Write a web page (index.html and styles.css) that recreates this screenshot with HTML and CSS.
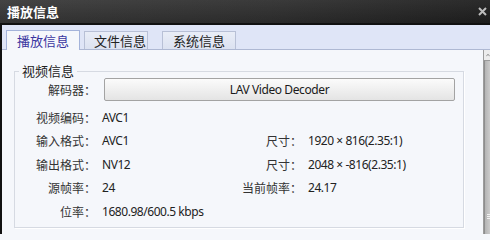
FILE: index.html
```html
<!DOCTYPE html>
<html lang="zh-CN">
<head>
<meta charset="utf-8">
<title>播放信息</title>
<link rel="stylesheet" href="styles.css">
</head>
<body>
<div class="window">
  <div class="titlebar">
    <span class="title">播放信息</span>
    <svg class="close" width="9" height="9" viewBox="0 0 9 9"><path d="M1 1L8 8M8 1L1 8" stroke="#bdbdbd" stroke-width="2"/></svg>
  </div>
  <div class="body">
    <div class="tabs">
      <div class="tab active t1">播放信息</div>
      <div class="tab t2">文件信息</div>
      <div class="tab t3">系统信息</div>
    </div>
    <div class="content">
      <div class="panel">
        <fieldset class="group">
          <legend>视频信息</legend>
          <div class="row-decoder">
            <div class="lbl">解码器：</div>
            <div class="btn">LAV Video Decoder</div>
          </div>
          <div class="grid">
            <div class="lbl">视频编码：</div><div class="val">AVC1</div><div></div><div></div>
            <div class="lbl">输入格式：</div><div class="val">AVC1</div><div class="lbl">尺寸：</div><div class="val">1920 × 816(2.35:1)</div>
            <div class="lbl">输出格式：</div><div class="val">NV12</div><div class="lbl">尺寸：</div><div class="val">2048 × -816(2.35:1)</div>
            <div class="lbl">源帧率：</div><div class="val">24</div><div class="lbl">当前帧率：</div><div class="val">24.17</div>
            <div class="lbl">位率：</div><div class="val">1680.98/600.5 kbps</div><div></div><div></div>
          </div>
        </fieldset>
      </div>
      <div class="scrollbar">
        <div class="sb-up"><svg width="5" height="4" viewBox="0 0 5 4"><path d="M0.5 3.5L2.5 1L4.5 3.5" fill="none" stroke="#7a7a7a" stroke-width="1"/></svg></div>
        <div class="sb-thumb"><div class="sb-grip"></div></div>
      </div>
    </div>
  </div>
</div>
</body>
</html>
```
FILE: styles.css
```css
html, body {
  margin: 0;
  padding: 0;
}
body {
  width: 490px;
  height: 234px;
  overflow: hidden;
  background: #f5f7fb;
  font-family: "Noto Sans CJK SC", "Noto Sans", sans-serif;
}
.window {
  width: 490px;
  height: 234px;
  display: flex;
  flex-direction: column;
}
.titlebar {
  height: 23px;
  border-bottom: 2px solid #111;
  background:
    linear-gradient(to bottom, rgba(255,255,255,0.05), rgba(0,0,0,0.12)),
    linear-gradient(to right, #3a3a3a, #303030 55%, #202020);
  display: flex;
  align-items: center;
  justify-content: space-between;
  padding: 0 3px 0 7px;
}
.title {
  color: #fff;
  font-weight: bold;
  font-size: 13px;
  line-height: 16px;
  font-family: "Noto Sans CJK SC", sans-serif;
}
.close {
  display: block;
  margin-top: -1px;
}
.body {
  flex: 1;
  display: flex;
  flex-direction: column;
  border-left: 2px solid #111;
}
.tabs {
  height: 24px;
  background: #dfe5f7;
  border-bottom: 1px solid #aeb8d3;
  display: flex;
  align-items: flex-end;
  padding-left: 4px;
}
.tab {
  box-sizing: border-box;
  font-size: 13px;
  color: #222;
  border: 1px solid #b8c0d6;
  border-bottom: none;
  height: 18px;
  line-height: 17px;
  background: linear-gradient(to bottom, #e9edf7, #dce2f1);
}
.tab.active {
  height: 20px;
  line-height: 19px;
  margin-bottom: -1px;
  background: #f5f7fb;
  border-color: #a4b3da;
  color: #3a35a0;
  position: relative;
}
.t1 { width: 74px; padding-left: 10px; }
.t2 { width: 64px; padding-left: 9px; margin-left: 4px; }
.t3 { width: 74px; padding-left: 10px; margin-left: 14px; }
.content {
  flex: 1;
  display: flex;
  background: #f5f7fb;
  min-height: 0;
}
.panel {
  flex: 1;
  padding: 0 19px 0 12px;
}
.group {
  margin: 14px 0 0 0;
  padding: 0 0 3px 0;
  border: 1px solid #d6dae2;
  box-shadow: 1px 1px 0 #fff;
  min-width: 0;
}
.group legend {
  margin-left: 4px;
  padding: 0 3px;
  font-size: 13px;
  line-height: 14px;
  color: #222;
}
.row-decoder,
.grid {
  display: grid;
  grid-template-columns: 81px 124px 70px 1fr;
  column-gap: 6px;
}
.row-decoder {
  height: 23px;
  align-items: center;
}
.row-decoder .btn {
  grid-column: 2 / 5;
}
.grid {
  margin-top: 5px;
  grid-auto-rows: 23.5px;
  align-items: center;
}
.lbl {
  text-align: right;
  font-size: 12px;
  line-height: 16px;
  color: #333;
  white-space: nowrap;
}
.val {
  font-family: "Noto Sans", sans-serif;
  font-size: 12px;
  letter-spacing: -0.45px;
  line-height: 16px;
  color: #222;
  white-space: nowrap;
}
.btn {
  box-sizing: border-box;
  height: 23px;
  margin: 0 8px 0 2px;
  border: 1px solid #a3a3a3;
  border-radius: 2px;
  background: linear-gradient(to bottom, #fbfbfb, #e4e4e4);
  text-align: center;
  font-family: "Noto Sans", sans-serif;
  font-size: 12px;
  letter-spacing: -0.4px;
  line-height: 21px;
  color: #1a1a1a;
}
.scrollbar {
  width: 6px;
  border-left: 1px solid #9c9c9c;
  background: #ececec;
  display: flex;
  flex-direction: column;
}
.sb-up {
  height: 10px;
  display: flex;
  align-items: center;
  padding-left: 2px;
}
.sb-up svg { display: block; }
.sb-thumb {
  flex: 1;
  border-left: 1px solid #8e8e8e;
  border-top: 1px solid #9a9a9a;
  background: linear-gradient(to right, #b4b4b4, #cbcbcb);
  display: flex;
  flex-direction: column;
  justify-content: flex-end;
  padding-bottom: 14px;
  padding-left: 2px;
}
.sb-grip {
  height: 6px;
  background: repeating-linear-gradient(to bottom, #f2f2f2 0, #f2f2f2 1px, transparent 1px, transparent 2px);
}
```
